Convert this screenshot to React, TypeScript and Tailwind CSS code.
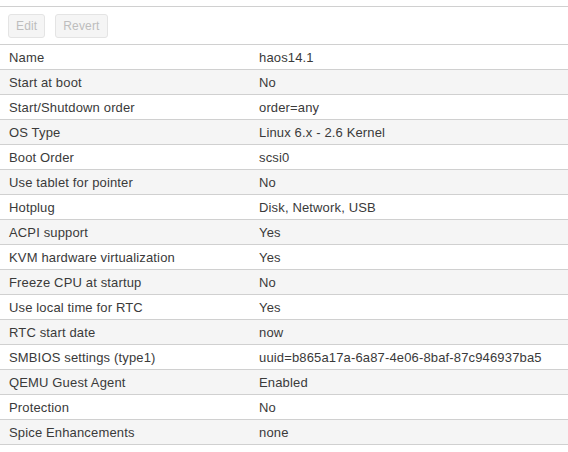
const rows: [string, string][] = [
  ['Name', 'haos14.1'],
  ['Start at boot', 'No'],
  ['Start/Shutdown order', 'order=any'],
  ['OS Type', 'Linux 6.x - 2.6 Kernel'],
  ['Boot Order', 'scsi0'],
  ['Use tablet for pointer', 'No'],
  ['Hotplug', 'Disk, Network, USB'],
  ['ACPI support', 'Yes'],
  ['KVM hardware virtualization', 'Yes'],
  ['Freeze CPU at startup', 'No'],
  ['Use local time for RTC', 'Yes'],
  ['RTC start date', 'now'],
  ['SMBIOS settings (type1)', 'uuid=b865a17a-6a87-4e06-8baf-87c946937ba5'],
  ['QEMU Guest Agent', 'Enabled'],
  ['Protection', 'No'],
  ['Spice Enhancements', 'none'],
];

export default function App() {
  return (
    <div className="w-[568px] h-[452px] bg-white text-[13px] tracking-[0.15px] text-[#3a3a3a] font-['Liberation_Sans',Arial,sans-serif]">
      <div className="h-[6px]" />
      {/* Toolbar */}
      <div className="h-[38px] border-t border-[#d0d0d0] flex items-center gap-[10px] px-[8px]">
        <button className="h-[24px] px-[7px] rounded-[3px] border border-[#e4e4e4] bg-[#f5f5f5] text-[#bdbdbd] text-[12px]">
          Edit
        </button>
        <button className="h-[24px] px-[7px] rounded-[3px] border border-[#e4e4e4] bg-[#f5f5f5] text-[#bdbdbd] text-[12px]">
          Revert
        </button>
      </div>
      {/* Grid */}
      <div className="border-t border-[#d0d0d0]">
        {rows.map(([k, v], i) => (
          <div
            key={k}
            className={`flex h-[25px] items-center pt-[2px] border-b border-[#d0d0d0] ${
              i % 2 === 1 ? 'bg-[#f5f5f5]' : 'bg-white'
            }`}
          >
            <div className="w-[250px] pl-[9px]">{k}</div>
            <div className="flex-1 pl-[9px]">{v}</div>
          </div>
        ))}
      </div>
    </div>
  );
}
